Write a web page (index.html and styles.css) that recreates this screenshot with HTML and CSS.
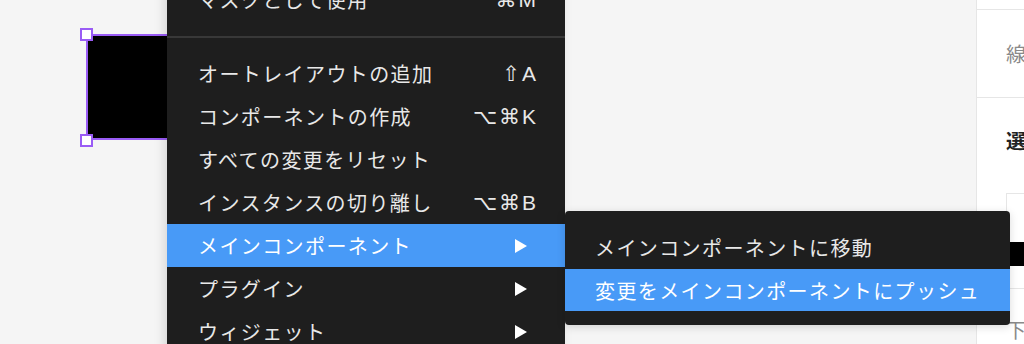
FILE: index.html
```html
<!DOCTYPE html>
<html lang="ja">
<head>
    <meta charset="UTF-8">
    <meta name="viewport" content="width=device-width, initial-scale=1.0">
    <title>Context menu</title>
    <link rel="stylesheet" href="styles.css">
</head>
<body>
    <div class="app">
        <div class="canvas">
            <div class="selection">
                <span class="handle handle-tl"></span>
                <span class="handle handle-bl"></span>
            </div>

            <div class="menu main-menu">
                <div class="item"><span class="label">マスクとして使用</span><span class="keys">⌘M</span></div>
                <div class="separator"></div>
                <div class="item"><span class="label">オートレイアウトの追加</span><span class="keys">⇧A</span></div>
                <div class="item"><span class="label">コンポーネントの作成</span><span class="keys">⌥⌘K</span></div>
                <div class="item"><span class="label">すべての変更をリセット</span></div>
                <div class="item"><span class="label">インスタンスの切り離し</span><span class="keys">⌥⌘B</span></div>
                <div class="item active"><span class="label">メインコンポーネント</span><span class="arrow"></span></div>
                <div class="item"><span class="label">プラグイン</span><span class="arrow"></span></div>
                <div class="item"><span class="label">ウィジェット</span><span class="arrow"></span></div>
            </div>

            <div class="menu sub-menu">
                <div class="item"><span class="label">メインコンポーネントに移動</span></div>
                <div class="item active"><span class="label">変更をメインコンポーネントにプッシュ</span></div>
            </div>
        </div>

        <div class="panel">
            <div class="panel-top"></div>
            <div class="panel-section stroke">線</div>
            <div class="panel-section selection-colors">
                <div class="section-title">選</div>
                <div class="color-box"></div>
                <div class="swatch"></div>
            </div>
            <div class="panel-section text-section">下</div>
        </div>
    </div>
</body>
</html>
```

FILE: styles.css
```css
html, body {
    margin: 0;
    padding: 0;
    height: 100%;
    overflow: hidden;
}
body {
    font-family: "Noto Sans CJK JP", "Noto Sans", sans-serif;
    background-color: #f5f5f5;
}
.app {
    display: flex;
    height: 344px;
}
.canvas {
    flex: 1;
    position: relative;
    background-color: #f5f5f5;
}

/* selected instance on the canvas */
.selection {
    position: absolute;
    left: 86px;
    top: 34px;
    width: 120px;
    height: 102px;
    background-color: #000;
    border: 2px solid #9a5cf5;
}
.handle {
    position: absolute;
    width: 9px;
    height: 9px;
    background-color: #fff;
    border: 2px solid #9a5cf5;
}
.handle-tl {
    left: -8px;
    top: -8px;
}
.handle-bl {
    left: -8px;
    bottom: -9px;
}

/* menus */
.menu {
    position: absolute;
    background-color: #1e1e1e;
    color: #e8e8e8;
    font-size: 20px;
    letter-spacing: 1.4px;
}
.main-menu {
    left: 167px;
    top: -30px;
    width: 398px;
    padding-top: 8px;
    box-shadow: -3px 0 10px rgba(0, 0, 0, 0.12);
}
.sub-menu {
    left: 565px;
    top: 211px;
    width: 445px;
    padding: 15px 0 14px;
    border-radius: 4px;
    box-shadow: 0 2px 8px rgba(0, 0, 0, 0.15);
}
.item {
    display: flex;
    align-items: center;
    height: 43px;
    padding: 0 29px 0 31px;
}
.sub-menu .item {
    padding-left: 30px;
}
.item.active {
    background-color: #489af7;
    color: #fff;
}
.sub-menu .item.active {
    height: 42px;
}
.label {
    flex: 1;
    white-space: nowrap;
}
.keys {
    font-family: "Liberation Sans", "DejaVu Sans", sans-serif;
    font-size: 21px;
    letter-spacing: 2px;
    margin-right: -2px;
}
.arrow {
    width: 0;
    height: 0;
    margin-right: 9px;
    border-top: 7px solid transparent;
    border-bottom: 7px solid transparent;
    border-left: 12px solid #fff;
}
.separator {
    height: 2px;
    margin: 15px 0 14px;
    background-color: #383838;
}

/* right properties panel */
.panel {
    width: 47px;
    background-color: #fff;
    border-left: 1px solid #e6e6e6;
    display: flex;
    flex-direction: column;
    overflow: hidden;
}
.panel-top {
    height: 10px;
    border-bottom: 1px solid #e6e6e6;
}
.panel-section {
    padding-left: 29px;
    border-bottom: 1px solid #e6e6e6;
    font-size: 20px;
    white-space: nowrap;
}
.stroke {
    height: 87px;
    line-height: 87px;
    color: #8a8a8a;
}
.selection-colors {
    height: 203px;
}
.section-title {
    margin-top: 28px;
    font-weight: bold;
    color: #222;
    line-height: 30px;
}
.color-box {
    margin-top: 37px;
    height: 48px;
    border-top: 1px solid #e6e6e6;
    border-left: 1px solid #e6e6e6;
}
.swatch {
    height: 24px;
    background-color: #000;
}
.text-section {
    color: #8a8a8a;
    padding-top: 26px;
    border-bottom: none;
}
```
